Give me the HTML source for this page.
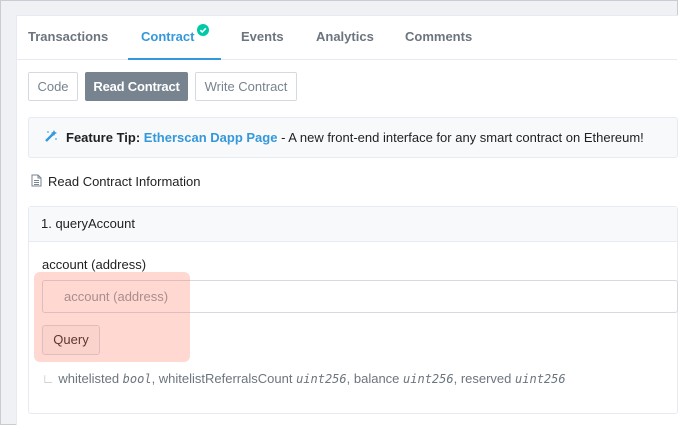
<!DOCTYPE html>
<html><head><style>
body{margin:0;width:678px;height:425px;overflow:hidden;background:#f0f1f4;font-family:"Liberation Sans",Arial,sans-serif;font-size:13px;color:#1e2022;position:relative}
.frame{position:absolute;left:0;top:0;width:676px;height:423px;border:1px solid #c9ccd1;}
.card{position:absolute;left:16px;top:15px;width:661px;height:409px;background:#fff;border-top:1px solid #e7eaf3;border-left:1px solid #e7eaf3}
.a{position:absolute;white-space:nowrap}
.tab{font-weight:bold;color:#6c757e;font-size:13px;top:29px}
.btn{position:absolute;top:72px;height:27px;border:1px solid #d5dae2;border-radius:2px;line-height:27px;text-align:center;color:#77838f;font-size:13px}
.m{font-family:'DejaVu Sans Mono',monospace;font-size:12px}
</style></head><body>
<div class="frame"></div>
<div class="card"></div>
<div class="a tab" style="left:28px">Transactions</div>
<div class="a tab" style="left:141px;color:#3498db">Contract</div>
<div class="a" style="left:197px;top:24px;width:12px;height:12px;border-radius:50%;background:#00c9a7"><svg width="12" height="12" style="position:absolute;left:0;top:0"><path d="M3.3 6.2 L5.2 8 L8.8 4.3" stroke="#fff" stroke-width="1.6" fill="none"/></svg></div>
<div class="a tab" style="left:241px">Events</div>
<div class="a tab" style="left:316px">Analytics</div>
<div class="a tab" style="left:405px">Comments</div>
<div class="a" style="left:17px;top:59px;width:660px;height:1px;background:#e7eaf3"></div>
<div class="a" style="left:128px;top:58px;width:93px;height:2px;background:#3498db"></div>
<div class="btn" style="left:28px;width:48px">Code</div>
<div class="btn" style="left:85px;width:101px;background:#77838f;border-color:#77838f;color:#fff;font-weight:bold;letter-spacing:-0.2px">Read Contract</div>
<div class="btn" style="left:195px;width:100px">Write Contract</div>
<div class="a" style="left:28px;top:117px;width:648px;height:39px;background:#f8f9fa;border:1px solid #e7eaf3;border-radius:3px"></div>
<svg class="a" style="left:44px;top:129px" width="14" height="14"><path d="M2 12 L9 5" stroke="#3498db" stroke-width="2.4"/><path d="M10 1 L11 3 L13 4 L11 5 L10 7 L9 5 L7 4 L9 3Z M4 2 L5 3 L4 4 L3 3Z M12 9 L13 10 L12 11 L11 10Z" fill="#3498db"/></svg>
<div class="a" style="left:66px;top:130px"><b>Feature Tip:</b> <b style="color:#3498db">Etherscan Dapp Page</b> - A new front-end interface for any smart contract on Ethereum!</div>
<svg class="a" style="left:31px;top:174px" width="11" height="13"><path d="M1 1 H7 L10 4 V12 H1Z M7 1 V4 H10 M3 6.5 H8 M3 8.5 H8 M3 10.5 H8" stroke="#77838f" fill="none" stroke-width="1"/></svg>
<div class="a" style="left:48px;top:174px">Read Contract Information</div>
<div class="a" style="left:28px;top:206px;width:648px;height:206px;border:1px solid #e7eaf3;border-radius:3px"></div>
<div class="a" style="left:29px;top:207px;width:648px;height:34px;background:#f8f9fa;border-bottom:1px solid #e7eaf3"></div>
<div class="a" style="left:41px;top:216px">1. queryAccount</div>
<div class="a" style="left:42px;top:257px">account (address)</div>
<div class="a" style="left:42px;top:280px;width:634px;height:31px;border:1px solid #d5dae2;border-radius:3px"></div>
<div class="a" style="left:64px;top:289px;color:#8c98a4">account (address)</div>
<div class="a" style="left:42px;top:325px;width:56px;height:28px;border:1px solid #d5dae2;border-radius:3px;background:#f8f9fa;text-align:center;line-height:28px">Query</div>
<div class="a" style="left:34px;top:272px;width:156px;height:90px;background:rgba(255,110,85,0.27);border-radius:6px"></div>
<div class="a" style="left:42px;top:371px;color:#6c757e;font-size:13px"><span style="color:#bbb">∟</span> whitelisted <i class="m">bool</i>, whitelistReferralsCount <i class="m">uint256</i>, balance <i class="m">uint256</i>, reserved <i class="m">uint256</i></div>
</body></html>
